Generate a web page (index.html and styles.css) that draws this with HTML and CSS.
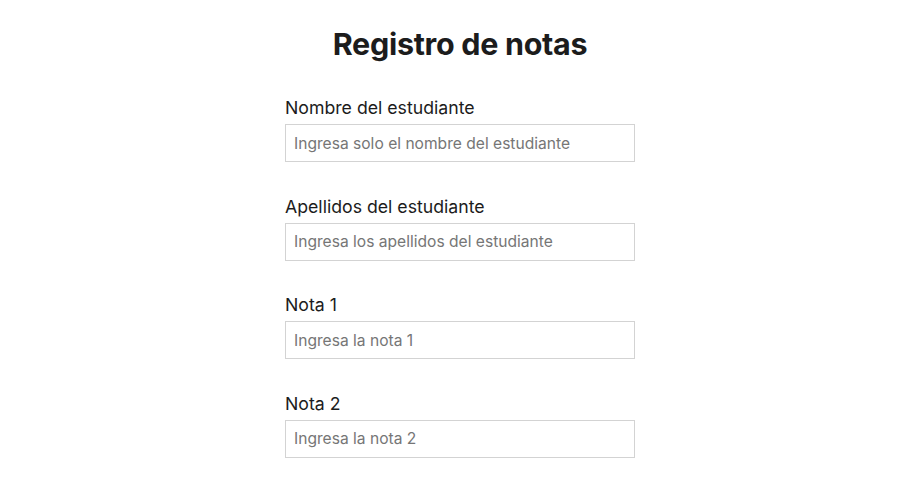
FILE: index.html
```html
<!DOCTYPE html>
<html lang="es">
<head>
<meta charset="utf-8">
<title>Registro de notas</title>
<link rel="stylesheet" href="styles.css">
</head>
<body>
<main class="page">
  <h1 class="title">Registro de notas</h1>
  <form class="form">
    <div class="field">
      <label class="label" for="nombre">Nombre del estudiante</label>
      <input class="input" id="nombre" type="text" placeholder="Ingresa solo el nombre del estudiante">
    </div>
    <div class="field">
      <label class="label" for="apellidos">Apellidos del estudiante</label>
      <input class="input" id="apellidos" type="text" placeholder="Ingresa los apellidos del estudiante">
    </div>
    <div class="field">
      <label class="label" for="nota1">Nota 1</label>
      <input class="input" id="nota1" type="text" placeholder="Ingresa la nota 1">
    </div>
    <div class="field">
      <label class="label" for="nota2">Nota 2</label>
      <input class="input" id="nota2" type="text" placeholder="Ingresa la nota 2">
    </div>
  </form>
</main>
</body>
</html>
```

FILE: styles.css
```css
* { box-sizing: border-box; }
html, body { margin: 0; padding: 0; background: #fff; }
body {
  font-family: Inter, "Noto Sans", sans-serif;
  color: #1a1a1a;
}
.page {
  width: 920px;
  display: flex;
  flex-direction: column;
  align-items: center;
  padding-top: 26px;
}
.title {
  margin: 0 0 34px;
  font-size: 30.5px;
  line-height: 36px;
  font-weight: 700;
  letter-spacing: -0.3px;
  color: #1c1c1c;
}
.form {
  width: 350px;
  display: flex;
  flex-direction: column;
  gap: 32.67px;
}
.field {
  display: flex;
  flex-direction: column;
  gap: 4px;
}
.label {
  font-size: 17.7px;
  line-height: 24px;
  color: #1c1c1c;
}
.input {
  height: 38px;
  width: 100%;
  border: 1px solid #d3d3d3;
  border-radius: 0;
  padding: 0 8px;
  font-family: inherit;
  font-size: 15.6px;
  color: #1c1c1c;
  outline: none;
}
.input::placeholder { color: #767676; }
```
